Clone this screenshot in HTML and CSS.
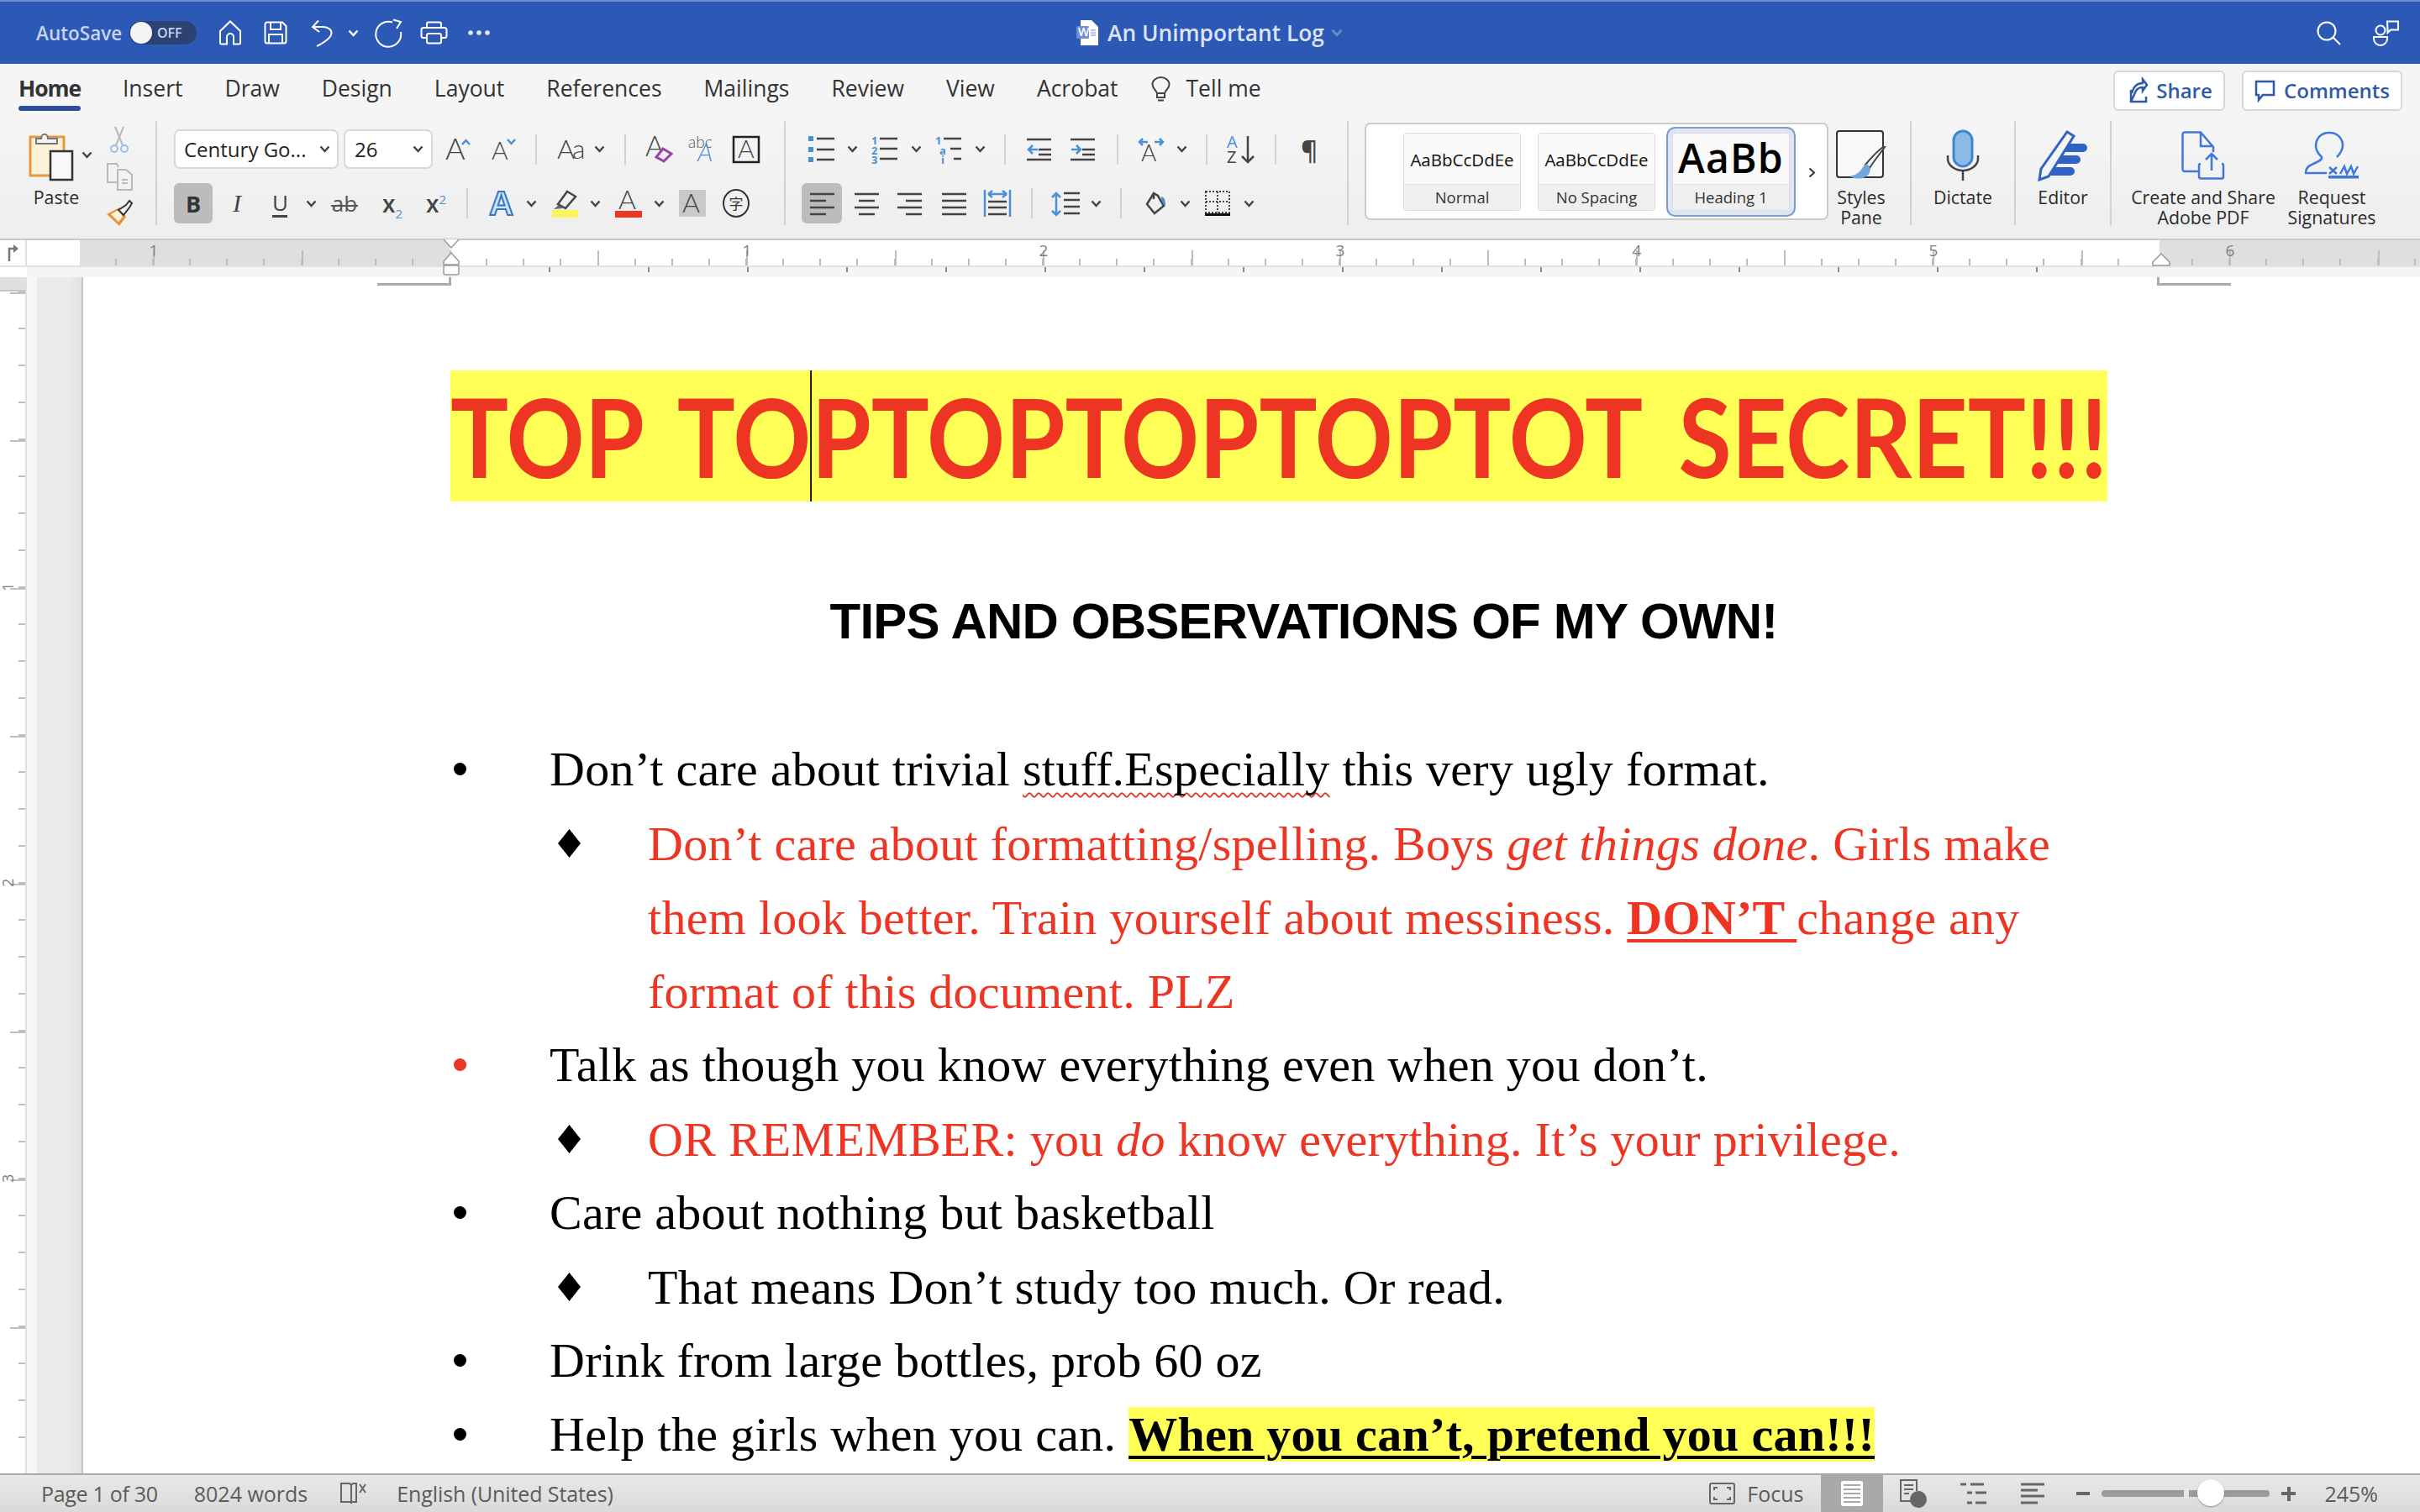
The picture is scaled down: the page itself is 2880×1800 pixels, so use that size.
FILE: index.html
```html
<!DOCTYPE html>
<html lang="en">
<head>
	<meta charset="UTF-8">
	<title>An Unimportant Log</title>
	<link rel="stylesheet" href="styles.css">
</head>
<body>
<svg class="defs"><symbol id="chev" viewBox="0 0 13 9"><path d="M1.5 1.5 6.5 7 11.5 1.5"/></symbol></svg>
<div class="app">

	<div class="titlebar">
		<div class="qat">
			<span class="autosave">AutoSave</span>
			<span class="toggle"><i></i><b>OFF</b></span>
			<svg class="tb-ic" width="28" height="30"><path d="M2 13 14 1.5 26 13V27a1.5 1.5 0 0 1-1.5 1.5H18V20a4 4 0 0 0-8 0v8.5H3.5A1.5 1.5 0 0 1 2 27Z"/></svg>
			<svg class="tb-ic" width="28" height="28"><path d="M4 1.5H22L26.500 6V24a2.500 2.500 0 0 1-2.500 2.500H4A2.500 2.500 0 0 1 1.500 24V4A2.500 2.500 0 0 1 4 1.500Z"/><path d="M8 1.500V10H20V1.500M6 26.500V16H22V26.500"/></svg>
			<svg class="tb-ic" width="26" height="33"><path d="M9 1.500 2 9l8 6M2 9H14C20 9 24.500 12 24.500 16 24.500 21 17 27 7 32"/></svg>
			<svg class="ch ch-w"><use href="#chev"/></svg>
			<svg class="tb-ic" width="34" height="33"><path d="M22 3.500A15 15 0 1 0 32 15M23 .5 32 3 27 11"/></svg>
			<svg class="tb-ic" width="33" height="28"><path d="M8 8V3.500A2 2 0 0 1 10 1.500H23a2 2 0 0 1 2 2V8M8 20H4a2.500 2.500 0 0 1-2.500-2.500V10.500A2.500 2.500 0 0 1 4 8H29a2.500 2.500 0 0 1 2.500 2.500V17.500A2.500 2.500 0 0 1 29 20H25"/><rect x="8" y="15" width="17" height="11.500" rx="2"/></svg>
			<svg width="26" height="6" class="dots"><circle cx="3" cy="3" r="2.800"/><circle cx="13" cy="3" r="2.800"/><circle cx="23" cy="3" r="2.800"/></svg>
		</div>
		<div class="doc-name">
			<svg width="26" height="30" class="word">
				<path class="wpage" d="M5 0H18L26 8V30H5Z"/>
				<rect class="wbox" x="0" y="7" width="15" height="15" rx="1.500"/>
				<text class="wtxt" x="2" y="19">W</text>
				<path class="wln" d="M17 12H23M17 15H23M17 18H23"/>
			</svg>
			<span>An Unimportant Log</span>
			<svg class="ch ch-dim"><use href="#chev"/></svg>
		</div>
		<div class="tb-right">
			<svg class="tb-ic" width="29" height="29"><circle cx="12" cy="12" r="10.500"/><path d="M19.500 19.500 28 28"/></svg>
			<svg class="tb-ic" width="33" height="33"><circle cx="10" cy="13" r="5.500"/><path d="M2 21H18V23A8 8 0 0 1 2 23Z M18 2.500H31V12.500H22L18.500 16V12.500Z"/></svg>
		</div>
	</div>

	<div class="tabs">
		<div class="tab on">Home</div>
		<div class="tab">Insert</div>
		<div class="tab">Draw</div>
		<div class="tab">Design</div>
		<div class="tab">Layout</div>
		<div class="tab">References</div>
		<div class="tab">Mailings</div>
		<div class="tab">Review</div>
		<div class="tab">View</div>
		<div class="tab">Acrobat</div>
		<div class="tab tell">
			<svg class="ic bulb" width="23" height="30"><path d="M7 20C5 15 1.500 14 1.500 9.500A10 8.500 0 0 1 21.500 9.500C21.500 14 18 15 16 20ZM7 20V25H16V20M8 28.500H15"/></svg>
			<span>Tell me</span>
		</div>
		<div class="tab-btns">
			<div class="btn btn-share">
				<svg class="ic-blue" width="26" height="30"><path d="M6 14V28H24V22M6 28 12 15C14 12 17 11 20 11V15L25 8 20 1.500V6C14 6 9 10 7 18"/></svg>
				<span>Share</span>
			</div>
			<div class="btn btn-comments">
				<svg class="ic-blue" width="25" height="26"><path d="M2 2H23V18H10L5 24V18H2Z"/></svg>
				<span>Comments</span>
			</div>
		</div>
	</div>

	<div class="ribbon">
		<div class="grp-paste">
			<div class="big big-paste">
				<div class="big-ic ic-left">
					<svg width="78" height="60">
						<rect class="o-clip" x="2" y="8" width="40" height="46"/>
						<path class="ic-line clip-top" d="M9 16V10H15C15 3 23 3 23 10H34V16Z"/>
						<rect class="w-doc" x="26" y="25" width="26" height="34"/>
						<svg class="ch" x="63" y="25" width="13" height="9"><use href="#chev"/></svg>
					</svg>
				</div>
				<div class="lbl">Paste</div>
			</div>
			<div class="small-col">
				<svg class="ic-grey" width="32" height="33"><path d="M11 1 20 23M21 1 12 23"/><circle class="blue-pale" cx="10" cy="27" r="4"/><circle class="blue-pale" cx="22" cy="27" r="4"/></svg>
				<svg class="ic-grey" width="32" height="33"><path d="M13 23H2V1H13L15 5M14 8H24L31 14V32H14ZM19 20H26M19 24H26"/></svg>
				<svg width="32" height="31"><path class="brush-o" d="M1 17 16 9 24 20 16 31Z"/><path class="brush-w" d="M6 17 15 12 20 20 15 26Z"/><path class="brush-k" d="M15 12 24 6 28 1 31 4 28 9 21 18Z"/></svg>
			</div>
		</div>
		<div class="gsep"></div>

		<div class="grp grp-font">
			<div class="tools font-1">
				<div class="combo combo-font"><span>Century Go...</span><svg class="ch"><use href="#chev"/></svg></div>
				<div class="combo combo-size"><span>26</span><svg class="ch"><use href="#chev"/></svg></div>
				<svg width="30" height="27"><text class="ag" x="0" y="26" font-size="36">A</text><path class="blue-line" d="M20 8 24.500 3 29 8"/></svg>
				<svg width="28" height="27"><text class="ag" x="0" y="26" font-size="30">A</text><path class="blue-line" d="M19 2 23.500 7 28 2"/></svg>
				<div class="vs"></div>
				<svg width="32" height="26"><text class="ag" x="0" y="24" font-size="32">A</text><text class="ag" x="18" y="24" font-size="32">a</text></svg>
				<svg class="ch"><use href="#chev"/></svg>
				<div class="vs"></div>
				<svg width="33" height="32"><text class="ag" x="0" y="24" font-size="34">A</text><path class="purple" d="M21 15 31 21 22 30 13 25Z"/></svg>
				<svg width="34" height="33"><text class="ag small-abc" x="0" y="15" font-size="19">abc</text><text class="ag blue-a" x="11" y="31" font-size="30">A</text></svg>
				<svg width="32" height="32"><rect class="box-a" x="1" y="1" width="30" height="30"/><text class="ag" x="6" y="26" font-size="30">A</text></svg>
			</div>
			<div class="tools font-2">
				<div class="on-btn bold-b">B</div>
				<span class="tl-i">I</span>
				<span class="tl-u">U</span>
				<svg class="ch"><use href="#chev"/></svg>
				<span class="tl-s">ab</span>
				<span class="tl-x">x<sub>2</sub></span>
				<span class="tl-x">x<sup>2</sup></span>
				<div class="vs"></div>
				<svg width="32" height="32"><text class="blue-fx" x="1" y="30" font-size="40">A</text></svg>
				<svg class="ch"><use href="#chev"/></svg>
				<svg width="31" height="33"><path class="ic-line" d="M18 2 28 8 16 22 7 17Z"/><path class="grey-fill" d="M2 23 8 18 13 22Z"/><rect class="yellow" y="24" width="31" height="9"/></svg>
				<svg class="ch"><use href="#chev"/></svg>
				<svg width="32" height="33"><text class="ag" x="4" y="23" font-size="32">A</text><rect class="red" y="25" width="32" height="8"/></svg>
				<svg class="ch"><use href="#chev"/></svg>
				<svg width="32" height="32"><rect class="grey-bg" width="32" height="32"/><text class="ag" x="4" y="27" font-size="32">A</text></svg>
				<span class="zi">字</span>
			</div>
		</div>
		<div class="gsep"></div>

		<div class="grp grp-para">
			<div class="tools para-1">
				<svg width="31" height="31"><path class="bl-fill" d="M0 0H6V6H0ZM0 13H6V19H0ZM0 25H6V31H0Z"/><path class="ic-line" d="M10 3H31M10 16H31M10 28H31"/></svg>
				<svg class="ch"><use href="#chev"/></svg>
				<svg width="31" height="34"><text class="num" x="0" y="11">1</text><text class="num" x="0" y="23">2</text><text class="num" x="0" y="34">3</text><path class="ic-line" d="M10 4H31M10 16H31M10 28H31"/></svg>
				<svg class="ch"><use href="#chev"/></svg>
				<svg width="31" height="34"><text class="num" x="0" y="11">1</text><text class="num" x="5" y="23">a</text><text class="num" x="7" y="34">i</text><path class="ic-line" d="M10 4H31M18 16H31M22 28H31"/></svg>
				<svg class="ch"><use href="#chev"/></svg>
				<div class="vs"></div>
				<svg width="29" height="28"><path class="ic-line" d="M0 2H29M14 14H29M14 20H29M0 26H29"/><path class="blue-line" d="M7 9 2 14 7 19M2 14H13"/></svg>
				<svg width="29" height="28"><path class="ic-line" d="M0 2H29M14 14H29M14 20H29M0 26H29"/><path class="blue-line" d="M7 9 12 14 7 19M1 14H12"/></svg>
				<div class="vs"></div>
				<svg width="32" height="28"><path class="blue-line" d="M6 1 2 5 6 9M2 5H12M26 1 30 5 26 9M20 5H30"/><text class="ag" x="4" y="28" font-size="28">A</text></svg>
				<svg class="ch"><use href="#chev"/></svg>
				<div class="vs"></div>
				<svg width="33" height="34"><text class="az-a" x="0" y="15">A</text><text class="az-z" x="0" y="33">Z</text><path class="ic-line" d="M25 1V32M18 25 25 32 32 25"/></svg>
				<div class="vs"></div>
				<span class="pil">¶</span>
			</div>
			<div class="tools para-2">
				<div class="on-btn">
					<svg width="30" height="27"><path class="ic-line" d="M1 2H30M1 10H20M1 18H30M1 26H20"/></svg>
				</div>
				<svg width="30" height="27"><path class="ic-line" d="M1 2H30M6 10H25M1 18H30M6 26H25"/></svg>
				<svg width="30" height="27"><path class="ic-line" d="M1 2H30M11 10H30M1 18H30M11 26H30"/></svg>
				<svg width="30" height="27"><path class="ic-line" d="M1 2H30M1 10H30M1 18H30M1 26H30"/></svg>
				<svg width="32" height="32"><path class="blue-line" d="M1 0V32M31 0V32M5 5 10 1M5 5 10 9M5 5H27M27 5 22 1M27 5 22 9"/><path class="ic-line" d="M5 14H27M5 21H27M5 29H27"/></svg>
				<div class="vs"></div>
				<svg width="33" height="29"><path class="blue-line" d="M5 28V2M0 7 5 2 10 7M0 23 5 28 10 23"/><path class="ic-line" d="M14 2H33M14 10H33M14 18H33M14 26H33"/></svg>
				<svg class="ch"><use href="#chev"/></svg>
				<div class="vs"></div>
				<svg width="25" height="26"><path class="ic-line" d="M10 1 V8 M10 1 15 4 22 16 11 25 2 14Z"/><path class="bl-fill" d="M19 5C23 6 24 9 24 16 21 14 19 10 19 5Z"/></svg>
				<svg class="ch"><use href="#chev"/></svg>
				<svg width="30" height="31"><path class="dotted" d="M1 1H29V26H1ZM15 1V26M1 13H29"/><rect class="k-fill" y="27" width="30" height="3"/></svg>
				<svg class="ch"><use href="#chev"/></svg>
			</div>
		</div>
		<div class="gsep"></div>

		<div class="gallery">
			<div class="style-card">
				<div class="sample">AaBbCcDdEe</div>
				<div class="style-name">Normal</div>
			</div>
			<div class="style-card">
				<div class="sample">AaBbCcDdEe</div>
				<div class="style-name">No Spacing</div>
			</div>
			<div class="style-card sel">
				<div class="sample sample-h">AaBbCcDd</div>
				<div class="style-name">Heading 1</div>
			</div>
			<svg class="ch ch-r" width="9" height="13"><path d="M1.500 1.500 7 6.500 1.500 11.500"/></svg>
		</div>

		<div class="big big-pane">
			<div class="big-ic">
				<svg width="60" height="60"><rect class="pane-page" x="1" y="1" width="55" height="55" rx="3"/><path class="brush-handle" d="M58 20C54 26 44 38 40 45L35 41C40 35 49 25 56 20Z"/><path class="bl-fill2" d="M37 40C30 42 32 52 16 55 27 60 40 58 41 46Z"/></svg>
			</div>
			<div class="lbl">Styles<br>Pane</div>
		</div>
		<div class="gsep sep-pane"></div>

		<div class="big big-dict">
			<div class="big-ic">
				<svg width="38" height="60"><rect class="mic" x="8" y="1" width="22" height="42" rx="11"/><path class="ic-line" d="M1 30V34C1 42 10 48 19 48S37 42 37 34V30M19 48V60"/></svg>
			</div>
			<div class="lbl">Dictate</div>
		</div>
		<div class="gsep"></div>

		<div class="big big-edit">
			<div class="big-ic">
				<svg width="60" height="62"><path class="ed-bar" d="M32 17H54a5 5 0 0 1 0 10H27ZM23 31H46a5 5 0 0 1 0 10H18ZM15 45H39a5 5 0 0 1 0 10H10Z"/><path class="ed-pen" d="M35 3 43 8 13 56 2 60 4 47Z"/></svg>
			</div>
			<div class="lbl">Editor</div>
		</div>
		<div class="gsep"></div>

		<div class="big big-pdf">
			<div class="big-ic">
				<svg width="50" height="57"><path class="pdf-l" d="M20 47H3a2.500 2.500 0 0 1-2.500-2.500V3A2.500 2.500 0 0 1 3 .5H22L37 18V24M22 1V17H37"/><path class="pdf-l" d="M22 38a2 2 0 0 0-2 2V53a2.500 2.500 0 0 0 2.500 2.500H47a2 2 0 0 0 2-2V40a2 2 0 0 0-2-2M35 46V27M28 33 35 26 42 33"/></svg>
			</div>
			<div class="lbl">Create and Share<br>Adobe PDF</div>
		</div>
		<div class="big big-req">
			<div class="big-ic">
				<svg width="64" height="56"><path class="pdf-l" d="M29 1C18 1 13 9 13 17 13 23 17 27 20 30 21 34 14 36 8 39 3 41 1 44 1 49H26M38 30C41 27 45 23 45 16 45 9 40 1 29 1"/><path class="pdf-l" d="M29 42 38 50M38 42 29 50M42 50 47 41 50 50 55 41 58 50 63 41"/><rect class="pdf-f" x="28" y="52" width="36" height="3.500"/></svg>
			</div>
			<div class="lbl">Request<br>Signatures</div>
		</div>
	</div>

	<div class="ruler">
		<div class="ruler-corner">
			<svg class="corner-ic" width="14" height="20"><path d="M2 20V5H8"/><path class="corner-a" d="M7 0 13 5 7 10Z"/></svg>
		</div>
		<div class="ruler-track">
			<div class="ruler-top">
				<div class="rule-m rule-l"></div>
				<div class="rule-m rule-mid"></div>
				<div class="rule-m rule-r"></div>
				<div class="rule-ticks"></div>
				<div class="rule-nums"><span>1</span><span></span><span>1</span><span>2</span><span>3</span><span>4</span><span>5</span><span>6</span></div>
				<svg class="ind-l" width="22" height="44"><path class="ind" d="M2 0 11 10 20 0M11 16 20 26V30H2V26Z"/><rect class="ind" x="2" y="31" width="18" height="11" rx="2"/></svg>
				<svg class="ind-r" width="22" height="16"><path class="ind" d="M11 1 21 11V15H1V11Z"/></svg>
			</div>
			<div class="ruler-low"><div class="low-ticks"></div></div>
		</div>
	</div>

	<div class="work">
		<div class="vruler">
			<div class="v-top"></div>
			<div class="v-body">
				<div class="v-ticks"></div>
				<div class="v-nums"><span>1</span><span>2</span><span>3</span></div>
			</div>
		</div>
		<div class="strip"></div>
		<div class="gutter"></div>
		<div class="page">
			<div class="crop crop-l"></div>
			<div class="crop crop-r"></div>
			<h1 class="doc-title"><span>TOP TO<i class="caret"></i>PTOPTOPTOPTOT SECRET!!!</span></h1>
			<h2 class="doc-sub">TIPS AND OBSERVATIONS OF MY OWN!</h2>
			<ul class="log">
				<li class="l1"><i class="dot"></i><p>Don’t care about trivial <span class="spell">stuff.Especially</span> this very ugly format.</p></li>
				<li class="l2"><svg class="dia" width="27" height="34"><path d="M13.500 0 27 17 13.500 34 0 17Z"/></svg><p class="red">Don’t care about formatting/spelling. Boys <em>get things done</em>. Girls make<br>them look better. Train yourself about messiness. <strong class="dont">DON’T </strong>change any<br>format of this document. PLZ</p></li>
				<li class="l1"><i class="dot dot-red"></i><p>Talk as though you know everything even when you don’t.</p></li>
				<li class="l2"><svg class="dia" width="27" height="34"><path d="M13.500 0 27 17 13.500 34 0 17Z"/></svg><p class="red">OR REMEMBER: you <em>do</em> know everything. It’s your privilege.</p></li>
				<li class="l1"><i class="dot"></i><p>Care about nothing but basketball</p></li>
				<li class="l2"><svg class="dia" width="27" height="34"><path d="M13.500 0 27 17 13.500 34 0 17Z"/></svg><p>That means Don’t study too much. Or read.</p></li>
				<li class="l1"><i class="dot"></i><p>Drink from large bottles, prob 60 oz</p></li>
				<li class="l1"><i class="dot"></i><p>Help the girls when you can. <strong class="mark">When you can’t, pretend you can!!!</strong></p></li>
			</ul>
		</div>
	</div>

	<div class="status">
		<span class="st-page">Page 1 of 30</span>
		<span class="st-words">8024 words</span>
		<svg class="st-ic st-book" width="32" height="28"><path d="M14 24H2V2H12L14 4V26M14 4 16 2H20V24H14"/><path d="M24 3 31 13M31 3 24 13"/></svg>
		<span class="st-lang">English (United States)</span>
		<div class="st-right">
			<svg class="st-ic" width="31" height="26"><rect x="1" y="1" width="29" height="24" rx="2"/><path d="M6 9V6H10M21 6H25V9M6 17V20H10M21 20H25V17"/></svg>
			<span class="st-focus">Focus</span>
			<div class="view-on"><svg width="26" height="30"><rect class="view-page" width="26" height="30" rx="2"/><path class="view-ln" d="M3 5H23M3 10H23M3 15H23M3 20H23M3 25H23"/></svg></div>
			<svg class="st-ic st-web" width="32" height="34"><path d="M13 26H1V1H20V14M5 7H16M5 12H16M5 17H11"/><circle class="globe" cx="22" cy="24" r="10"/></svg>
			<svg class="st-ic st-outl" width="31" height="26"><path d="M0 2H7M12 2H20M8 12H14M18 12H31M8 24H14M18 24H31M20 2H28"/></svg>
			<svg class="st-ic st-draft" width="28" height="26"><path d="M0 2H28M0 9H20M0 16H28M0 24H20"/></svg>
			<div class="zoom">
				<i class="z-minus"></i>
				<div class="z-track"><i class="z-mark"></i><i class="z-knob"></i></div>
				<i class="z-plus"></i>
			</div>
			<span class="st-pct">245%</span>
		</div>
	</div>
</div>
</body>
</html>
```

FILE: styles.css
```css
*{box-sizing:border-box;}
html,body{margin:0;padding:0;}
body{width:2880px;height:1800px;overflow:hidden;font-family:"Open Sans","Noto Sans",sans-serif;color:#333;background:#fff;}
.defs{display:none;}
.app{display:flex;flex-direction:column;height:1800px;}
svg{display:block;flex:none;overflow:visible;}
i{font-style:normal;}

/* title bar */
.titlebar{height:76px;flex:none;display:flex;align-items:center;background:#2c59b5;border-top:2px solid #6f8fd0;color:#fff;}
.qat{width:1281px;padding-left:43px;display:grid;grid-auto-flow:column;grid-template-columns:111px 106px 54px 56px 44px 31px 55px 57px auto;justify-content:start;align-items:center;}
.autosave{font-size:22.500px;font-weight:600;color:#c6d4ef;}
.toggle{width:80px;height:28px;border-radius:14px;background:#2b4273;display:flex;align-items:center;padding-left:1px;}
.toggle i{width:26px;height:26px;border-radius:50%;background:#f4f4f4;}
.toggle b{font-size:16px;font-weight:600;color:#c6d4ef;margin-left:6px;}
.tb-ic{fill:none;stroke:#fff;stroke-width:2;}
.dots{fill:#e4eaf7;}
.ch{width:13px;height:9px;fill:none;stroke:#444;stroke-width:2.500;}
.ch-w{stroke:#fff;}
.ch-dim{stroke:#6a8bcb;width:16px;height:10px;}
.doc-name{display:flex;align-items:center;font-size:26.300px;font-weight:600;color:#dbe3f5;}
.doc-name span{margin:0 7px 0 11px;}
.word .wpage{fill:#fff;}
.word .wbox{fill:#6f8fd4;}
.word .wtxt{fill:#fff;font-size:14px;font-weight:600;}
.word .wln{stroke:#8fb0e8;stroke-width:1.500;}
.tb-right{margin-left:auto;padding-right:24px;display:flex;align-items:center;gap:37px;}

/* tabs */
.tabs{height:64px;flex:none;display:flex;align-items:flex-start;gap:50px;padding:11px 21px 0 22px;background:#f5f5f5;font-size:26.500px;line-height:36px;color:#333;}
.tab.on{font-weight:700;letter-spacing:-1.100px;}
.tab.on::after{content:"";display:block;height:6px;margin-top:3px;border-radius:3px;background:#2e4f96;}
.tell{display:flex;align-items:center;gap:19px;margin-left:-11px;}
.bulb{margin-top:2px;}
.ic{fill:none;stroke:#444;stroke-width:2;}
.tab-btns{margin-left:auto;margin-top:-3px;display:flex;gap:20px;}
.btn{height:48px;background:#fff;border:2px solid #d8d8d8;border-radius:6px;display:flex;align-items:center;justify-content:center;gap:10px;font-size:24px;font-weight:600;color:#2e5aa8;}
.btn-share{width:133px;}
.btn-comments{width:191px;}
.ic-blue{fill:none;stroke:#2e5aa8;stroke-width:2.500;}

/* ribbon */
.ribbon{height:146px;flex:none;display:flex;align-items:flex-start;background:linear-gradient(#f5f5f5,#eee);border-bottom:2px solid #c9c9c9;font-size:20px;color:#333;}
.gsep{width:2px;height:124px;margin-top:4px;background:#d2d2d2;flex:none;}
.grp-paste{width:185px;flex:none;display:flex;padding-left:33px;}
.big{flex:none;display:flex;flex-direction:column;align-items:center;white-space:nowrap;}
.big-ic{height:66px;margin-top:12px;margin-bottom:5px;display:flex;align-items:center;}
.ic-left{align-self:flex-start;margin-left:1px;}
.lbl{font-size:21.300px;line-height:24px;text-align:center;color:#2c2c2c;}
.big-paste{width:68px;}
.small-col{margin:10px 0 0 25px;display:flex;flex-direction:column;gap:11px;}
.o-clip{fill:#fbf2d9;stroke:#e79a3c;stroke-width:3;}
.ic-line{fill:none;stroke:#444;stroke-width:2.500;}
.clip-top{fill:#f4f4f4;stroke:#777;stroke-width:2;}
.w-doc{fill:#f8f8f8;stroke:#333;stroke-width:2.500;}
.ic-grey{fill:none;stroke:#b9b9b9;stroke-width:2;}
.blue-line{fill:none;stroke:#4a90d2;stroke-width:2.500;}
.blue-pale{fill:none;stroke:#9dbfe2;stroke-width:2;}
.brush-o{fill:#e9963b;}
.brush-w{fill:#f9f3e2;}
.brush-k{fill:#f2f2f2;stroke:#333;stroke-width:2;}

.grp{flex:none;padding-top:14px;display:flex;flex-direction:column;gap:17px;}
.grp-font{width:746px;padding-left:20px;}
.grp-para{width:668px;padding-left:19px;}
.tools{display:grid;grid-auto-flow:column;justify-content:start;align-items:center;height:48px;}
.font-1{height:47px;grid-template-columns:202px 121px 55px 52px 26px 44px 36px 25px 51px 53px auto;}
.font-2{grid-template-columns:68px 49px 40px 30px 61px 52px 48px 26px 45px 31px 45px 30px 46px 30px 52px auto;}
.para-1{height:47px;padding-left:8px;grid-template-columns:46px 29px 47px 29px 47px 35px 27px 52px 55px 25px 46px 35px 25px 57px 31px auto;}
.para-2{grid-template-columns:62px 51px 53px 51px 56px 25px 46px 35px 30px 41px 30px 46px auto;}
.vs{width:2px;height:36px;background:#d2d2d2;}

.combo{height:47px;background:#fff;border:2px solid #d8d8d8;border-radius:7px;display:flex;align-items:center;justify-content:space-between;font-size:24px;color:#222;}
.combo-font{width:196px;padding:0 8px 0 10px;}
.combo-size{width:106px;padding:0 9px 0 11px;}
.ag{font-family:Lato,sans-serif;font-weight:300;fill:#444;}
.small-abc{fill:#555;}
.blue-a{fill:#4a90d2;font-style:italic;}
.purple{fill:#f4e9f6;stroke:#93459f;stroke-width:3;}
.box-a{fill:none;stroke:#222;stroke-width:2.500;}
.on-btn{width:48px;height:48px;background:#bcbcbc;border-radius:6px;display:flex;align-items:center;justify-content:center;}
.bold-b{width:46px;font-size:27px;font-weight:700;color:#333;}
.tl-i{font-family:"Liberation Serif",serif;font-style:italic;font-size:30px;color:#444;padding-left:2px;}
.tl-u{font-size:26px;line-height:30px;color:#444;border-bottom:3px solid #444;width:18px;text-align:center;}
.tl-s{font-size:26px;line-height:30px;color:#555;width:32px;text-align:center;background:linear-gradient(#555,#555) center 17px/100% 2px no-repeat;}
.tl-x{font-size:28px;font-weight:600;color:#444;line-height:30px;}
.tl-x sub,.tl-x sup{font-size:15px;font-weight:400;color:#4a90d2;line-height:0;}
.blue-fx{font-family:"Liberation Sans",sans-serif;font-weight:700;fill:#cfe3f6;stroke:#2f7ac8;stroke-width:2;}
.grey-fill{fill:#666;}
.yellow{fill:#fdf35a;}
.red{fill:#ee3524;}
.grey-bg{fill:#c9c9c9;}
.zi{width:32px;height:34px;border:2px solid #333;border-radius:50%;font:17px/30px "Noto Sans CJK SC",sans-serif;text-align:center;color:#333;}
.bl-fill{fill:#4a90d2;}
.num{font-size:13px;font-weight:700;fill:#4a90d2;}
.az-a{font-size:20px;fill:#4a90d2;}
.az-z{font-size:20px;fill:#444;}
.pil{font-size:31px;line-height:30px;color:#444;font-weight:600;}
.dotted{fill:none;stroke:#444;stroke-width:2;stroke-dasharray:2 2;}
.k-fill{fill:#111;}

/* style gallery */
.gallery{width:552px;height:116px;margin:6px 0 0 19px;flex:none;background:#fff;border:2px solid #cbcbcb;border-radius:7px;display:flex;align-items:flex-start;gap:20px;padding:10px 0 0 44px;position:relative;}
.style-card{width:140px;height:93px;background:#fafafa;border:1px solid #dcdcdc;border-radius:4px;display:flex;flex-direction:column;overflow:hidden;}
.style-card.sel{box-shadow:0 0 0 5px #dfe6f3,0 0 0 7px #7f9bcb;overflow:visible;}
.sample{height:61px;font-size:20.500px;line-height:62px;text-align:center;color:#111;white-space:nowrap;overflow:hidden;}
.sample-h{font-size:48px;line-height:58px;letter-spacing:1.200px;text-align:left;padding-left:6px;color:#000;margin-right:4px;font-weight:600;}
.style-name{flex:1;background:#efefef;border-top:1px solid #e4e4e4;font-size:18.500px;line-height:30px;text-align:center;color:#333;}
.ch-r{width:9px;height:13px;stroke:#333;stroke-width:2;margin:41px 0 0 2px;}

.big-pane{width:78px;}
.sep-pane{margin-left:19px;}
.pane-page{fill:#f8f8f8;stroke:#333;stroke-width:2;}
.brush-handle{fill:#f4f4f4;stroke:#444;stroke-width:2;}
.bl-fill2{fill:#6fa6dc;}
.big-dict{width:122px;}
.mic{fill:#8dbbe8;stroke:#3e86cf;stroke-width:3;}
.big-edit{width:112px;}
.ed-bar{fill:#2f62c4;}
.ed-pen{fill:#f4f4f4;stroke:#2f62c4;stroke-width:3;}
.big-pdf{width:218px;}
.big-req{width:88px;}
.pdf-l{fill:none;stroke:#3f78dc;stroke-width:2.500;}
.pdf-f{fill:#3f78dc;}

/* horizontal ruler */
.ruler{height:44px;flex:none;display:flex;background:#fff;}
.ruler-corner{width:32px;height:32px;flex:none;border-right:2px solid #e0e0e0;border-bottom:2px solid #e0e0e0;padding:5px 0 0 9px;}
.corner-ic{fill:none;stroke:#777;stroke-width:2.500;}
.corner-a{fill:#777;stroke:none;}
.ruler-track{flex:1;position:relative;}
.ruler-top{height:32px;display:flex;position:relative;border-bottom:2px solid #e0e0e0;}
.rule-m{height:30px;}
.rule-l{width:440px;margin-left:63px;background:#dfdfdf;}
.rule-mid{width:2035px;}
.rule-r{flex:1;background:#dfdfdf;}
.rule-ticks{position:absolute;left:63px;right:0;top:0;height:30px;background:
	repeating-linear-gradient(90deg,transparent 0 41.900px,#bdbdbd 41.900px 43.900px,transparent 43.900px 44.125px) 0 100%/100% 8px no-repeat,
	repeating-linear-gradient(90deg,transparent 0 87px,#bdbdbd 87px 89px,transparent 89px 176.500px) 0 100%/100% 18px no-repeat;}
.rule-nums{position:absolute;left:-25.500px;top:-2px;display:grid;grid-template-columns:repeat(8,353px);font-size:19px;line-height:28px;color:#808080;text-align:center;}
.ind{fill:#fff;stroke:#9a9a9a;stroke-width:1.500;}
.ind-l{position:absolute;left:494px;top:-1px;z-index:2;}
.ind-r{position:absolute;left:2529px;top:15px;}
.ruler-low{height:12px;background:#f5f5f5;padding-left:621px;}
.low-ticks{height:6px;width:1884px;background:repeating-linear-gradient(90deg,#8a8a8a 0 2px,transparent 2px 118px);}

/* work area */
.work{flex:1;display:flex;min-height:0;overflow:hidden;}
.vruler{width:32px;flex:none;border-right:2px solid #e0e0e0;display:flex;flex-direction:column;}
.v-top{height:17px;background:#dfdfdf;border-bottom:2px solid #c4c4c4;}
.v-body{flex:1;position:relative;}
.v-ticks{position:absolute;inset:0;background:
	repeating-linear-gradient(#bdbdbd 0 1px,transparent 1px 43px,#bdbdbd 43px 44px) 100% 0/8px 100% no-repeat,
	repeating-linear-gradient(transparent 0 1px,#bdbdbd 1px 3px,transparent 3px 176px) 100% 0/18px 100% no-repeat;}
.v-nums{position:absolute;left:0;top:176px;width:18px;display:grid;grid-auto-rows:352px;font-size:18px;line-height:18px;color:#808080;}
.v-nums span{writing-mode:vertical-rl;transform:rotate(180deg);text-align:center;}
.strip{width:12px;flex:none;background:#f6f6f6;}
.gutter{width:55px;flex:none;background:linear-gradient(90deg,#ebebeb 70%,#e2e2e2);border-right:2px solid #c4c4c4;}
.page{flex:1;position:relative;padding:111px 313px 0 437px;background:#fff;overflow:hidden;font-family:"Liberation Serif",serif;color:#000;}
.crop{position:absolute;top:0;width:88px;height:10px;border-bottom:3px solid #ababab;}
.crop-l{left:350px;border-right:3px solid #ababab;}
.crop-r{left:2468px;border-left:3px solid #ababab;}

/* document */
.doc-title{margin:0;font:700 130px/156px Lato,sans-serif;white-space:nowrap;color:#ee3524;word-spacing:20px;}
.doc-title span{background:#ffff55;display:inline-block;transform:scaleX(.8866);transform-origin:0 0;}
.caret{display:inline-block;width:2px;height:156px;background:#000;margin:0 -1px;vertical-align:top;}
.doc-sub{margin:107px 0 0;font:700 60px/72px "Liberation Sans",sans-serif;letter-spacing:-.8px;text-align:center;white-space:nowrap;}
.log{list-style:none;margin:96px 0 0;padding:0;font-size:58px;letter-spacing:.27px;line-height:88px;white-space:nowrap;}
.log li{display:flex;align-items:flex-start;}
.log p{margin:0;}
.l1{padding-left:4px;}
.l2{padding-left:128px;}
.l2 p{margin:1px 0 -1px;}
.dot{width:15px;height:15px;margin:36px 99px 0 0;border-radius:50%;background:#000;flex:none;}
.dot-red{background:#ee3524;}
.dia{margin:27px 80px 0 0;fill:#000;}
p.red{color:#ee3524;}
.spell{text-decoration:underline wavy #e0392b 2px;text-underline-offset:8px;text-decoration-skip-ink:none;}
.dont{text-decoration:underline;text-decoration-thickness:4px;text-underline-offset:6px;}
.mark{background:#ffff55;text-decoration:underline;text-decoration-thickness:4px;text-underline-offset:6px;}

/* status bar */
.status{height:46px;flex:none;display:flex;align-items:center;border-top:2px solid #a9a9a9;background:linear-gradient(#e8e8e8,#dadada);font-size:25px;color:#5c5c5c;padding-left:49px;}
.st-page{letter-spacing:-.3px;}
.st-words{margin-left:43px;}
.st-ic{fill:none;stroke:#666;stroke-width:2;}
.st-book{margin-left:38px;}
.st-lang{margin-left:36px;letter-spacing:-.1px;}
.st-right{margin-left:auto;display:flex;align-items:center;height:44px;}
.st-focus{margin:0 21px 0 14px;}
.view-on{width:74px;height:44px;background:#a9a9a9;display:flex;align-items:center;justify-content:center;}
.view-page{fill:#fff;}
.view-ln{stroke:#a9a9a9;stroke-width:2;}
.st-web{margin-left:20px;}
.globe{fill:#666;stroke:none;}
.st-outl{margin-left:40px;}
.st-draft{margin-left:41px;}
.st-outl,.st-draft{stroke-width:3;}
.zoom{display:flex;align-items:center;margin-left:38px;}
.z-minus{width:16px;height:4px;background:#666;margin-right:14px;}
.z-track{width:200px;height:8px;border-radius:4px;background:#9b9b9b;position:relative;}
.z-mark{position:absolute;left:98px;top:-2px;width:6px;height:12px;border-radius:3px;background:#e8e8e8;}
.z-knob{position:absolute;left:114px;top:-13px;width:32px;height:32px;border-radius:50%;background:#fff;box-shadow:0 1px 2px rgba(0,0,0,.35);}
.z-plus{width:17px;height:17px;margin-left:14px;background:linear-gradient(#666,#666) center/100% 4px no-repeat,linear-gradient(#666,#666) center/4px 100% no-repeat;}
.st-pct{margin:0 50px 0 34px;}
```
